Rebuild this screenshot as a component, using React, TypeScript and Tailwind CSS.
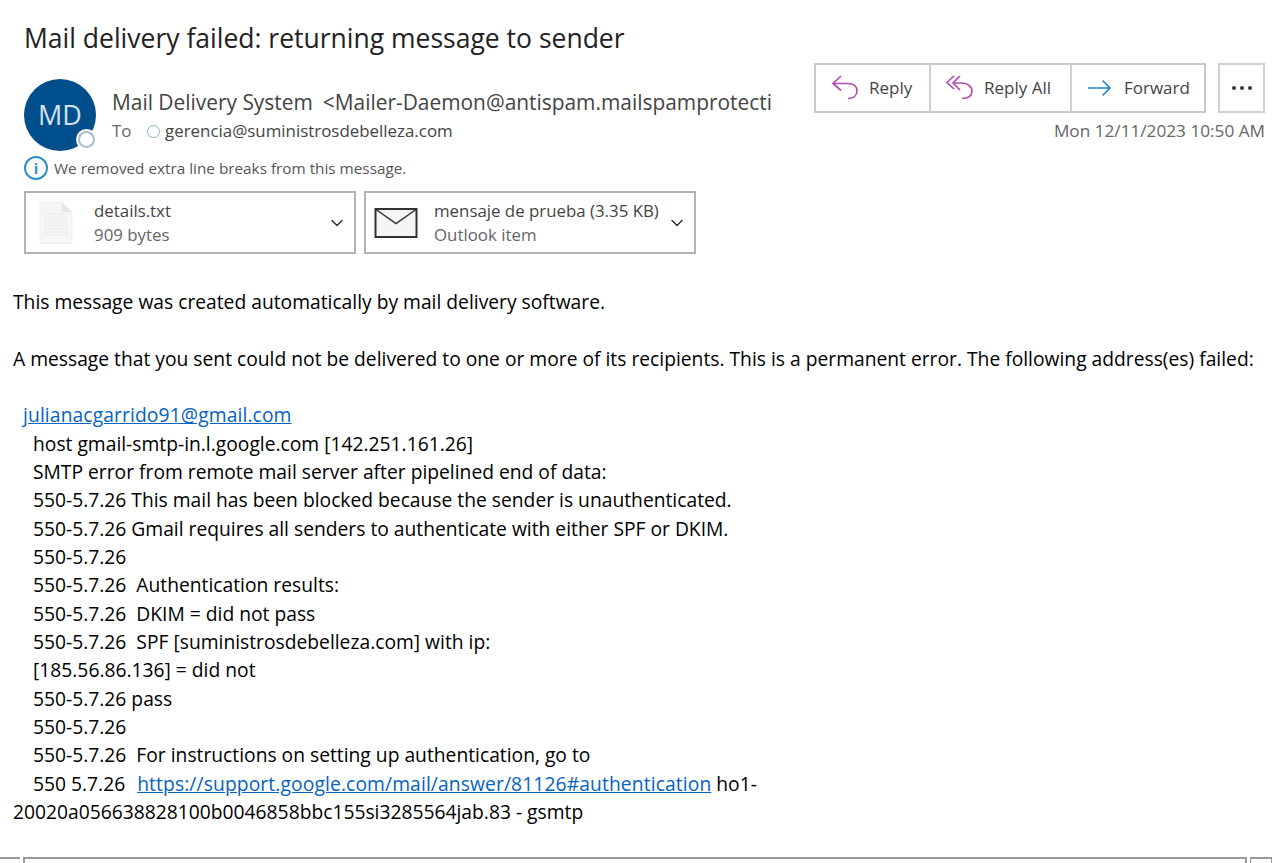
import { ChevronDown } from "lucide-react";

const font = "font-['Open_Sans',sans-serif]";

function ReplyIcon() {
  return (
    <svg width="28" height="28" viewBox="0 0 28 28" fill="none" stroke="#b04fb2" strokeWidth="1.7">
      <path d="M10 2 L2 9.5 L10 16.5" />
      <path d="M2 9.5 H17 C23 9.5 26 13 26 17 C26 21.5 22.5 24.5 17 24.5" />
    </svg>
  );
}

function ReplyAllIcon() {
  return (
    <svg width="28" height="28" viewBox="0 0 28 28" fill="none" stroke="#b04fb2" strokeWidth="1.7">
      <path d="M8 2 L1 8.5 L8 15" />
      <path d="M14 2 L7 9 L14 16" />
      <path d="M7 9 H16 C22 9 26 13 26 17 C26 21.5 22.5 24.5 16 24.5" />
    </svg>
  );
}

function ForwardIcon() {
  return (
    <svg width="24" height="20" viewBox="0 0 24 20" fill="none" stroke="#2b88c8" strokeWidth="1.6">
      <path d="M1 10 H23" />
      <path d="M15.5 2.5 L23 10 L15.5 17.5" />
    </svg>
  );
}

function DocIcon() {
  return (
    <svg width="34" height="42" viewBox="0 0 34 42">
      <path d="M1 0.5 H23 L33 10 V41.5 H1 Z" fill="#f6f6f6" stroke="#efefef" />
      <path d="M23 0.5 V10 H33 Z" fill="#e6e6e6" />
      <path d="M5 12 H29 M5 15 H29 M5 18 H29 M5 21 H29 M5 24 H29 M5 27 H29 M5 30 H29 M5 33 H29" stroke="#eaeaea" />
    </svg>
  );
}

function EnvelopeIcon() {
  return (
    <svg width="44" height="30" viewBox="0 0 44 30" fill="#f5f5f5" stroke="#333333" strokeWidth="2">
      <rect x="1.5" y="1" width="41" height="28" />
      <path d="M2 1.5 L22 15.5 L42 1.5" fill="none" strokeWidth="1.5" />
    </svg>
  );
}

function Attachment({ icon, name, sub, gap }: { icon: React.ReactNode; name: string; sub: string; gap: string }) {
  return (
    <div className="w-[332px] h-[63px] border-2 border-[#b4b4b4] bg-white flex items-center">
      <div className={`flex shrink-0 ${gap}`}>{icon}</div>
      <div className="flex-1 pt-[1px] text-[16.85px] leading-[24px] text-[#444] whitespace-nowrap">
        <div>{name}</div>
        <div className="text-[#666]">{sub}</div>
      </div>
      <ChevronDown className="w-[20px] h-[20px] text-[#333] mr-[7px]" strokeWidth={1.8} />
    </div>
  );
}

const lines = [
  "host gmail-smtp-in.l.google.com [142.251.161.26]",
  "SMTP error from remote mail server after pipelined end of data:",
  "550-5.7.26 This mail has been blocked because the sender is unauthenticated.",
  "550-5.7.26 Gmail requires all senders to authenticate with either SPF or DKIM.",
  "550-5.7.26",
  "550-5.7.26  Authentication results:",
  "550-5.7.26  DKIM = did not pass",
  "550-5.7.26  SPF [suministrosdebelleza.com] with ip:",
  "[185.56.86.136] = did not",
  "550-5.7.26 pass",
  "550-5.7.26",
  "550-5.7.26  For instructions on setting up authentication, go to",
];

export default function App() {
  return (
    <div className={`w-[1280px] h-[863px] overflow-hidden bg-white flex flex-col ${font}`}>
      <h1 className="pl-[24px] pt-[19px] text-[26.5px] leading-[38px] text-[#222] whitespace-nowrap">
        Mail delivery failed: returning message to sender
      </h1>

      <div className="flex h-[196px] pl-[24px] pr-[15px] pt-[6px]">
        <div className="w-[747px] shrink-0">
          <div className="flex pt-[16px]">
            <div className="relative w-[72px] h-[72px] shrink-0 rounded-full bg-[#004e8c] flex items-center justify-center text-[27px] text-[#d5e3f0]">
              MD
              <div className="absolute left-[52px] top-[50px] w-[21px] h-[21px] rounded-full bg-white flex items-center justify-center">
                <div className="w-[17px] h-[17px] rounded-full border-2 border-[#a9bcc9]" />
              </div>
            </div>
            <div className="pl-[16px] min-w-0">
              <div className="flex text-[20.9px] leading-[28px] pt-[9px] text-[#444] whitespace-nowrap">
                <span>Mail Delivery System</span>
                <span className="ml-[10px]">&lt;Mailer-Daemon@antispam.mailspamprotecti</span>
              </div>
              <div className="flex items-center h-[30px] text-[16.9px] text-[#444] whitespace-nowrap">
                <span className="text-[#666] w-[35px]">To</span>
                <span className="w-[13px] h-[13px] rounded-full border border-[#8fb0c4] mr-[5px]" />
                gerencia@suministrosdebelleza.com
              </div>
            </div>
          </div>
          <div className="flex items-center h-[24px] mt-[5px] text-[15.3px] text-[#555] whitespace-nowrap">
            <div className="w-[24px] h-[24px] rounded-full border-2 border-[#2d8fc4] flex items-center justify-center text-[#2d8fc4] text-[15px] font-bold mr-[6px]">
              i
            </div>
            <span className="pt-[1px]">We removed extra line breaks from this message.</span>
          </div>
          <div className="flex gap-[8px] mt-[11px]">
            <Attachment icon={<DocIcon />} name="details.txt" sub="909 bytes" gap="ml-[13px] mr-[21px]" />
            <Attachment icon={<EnvelopeIcon />} name="mensaje de prueba (3.35 KB)" sub="Outlook item" gap="ml-[8px] mr-[16px]" />
          </div>
        </div>

        <div className="flex-1 flex flex-col items-end">
          <div className="flex gap-[12px]">
            <div className="flex h-[50px] border-2 border-[#c8c8c8] text-[17px] text-[#444]">
              <div className="w-[115px] flex items-center pl-[15px] gap-[10px] border-r-2 border-[#d0d0d0]">
                <ReplyIcon />
                Reply
              </div>
              <div className="w-[141px] flex items-center pl-[15px] gap-[10px] border-r-2 border-[#d0d0d0]">
                <ReplyAllIcon />
                Reply All
              </div>
              <div className="w-[132px] flex items-center pl-[15px] gap-[13px]">
                <ForwardIcon />
                Forward
              </div>
            </div>
            <div className="w-[47px] h-[50px] border-2 border-[#d0d0d0] flex items-center justify-center gap-[4px]">
              <span className="w-[4px] h-[4px] rounded-full bg-[#333]" />
              <span className="w-[4px] h-[4px] rounded-full bg-[#333]" />
              <span className="w-[4px] h-[4px] rounded-full bg-[#333]" />
            </div>
          </div>
          <div className="text-[17.2px] leading-[24px] text-[#666] mt-[6px] whitespace-nowrap">Mon 12/11/2023 10:50 AM</div>
        </div>
      </div>

      <div className="pl-[13px] pt-[35px] text-[19.25px] leading-[28.33px] text-black whitespace-pre">
        <div>This message was created automatically by mail delivery software.</div>
        <div className="h-[28.33px]" />
        <div>A message that you sent could not be delivered to one or more of its recipients. This is a permanent error. The following address(es) failed:</div>
        <div className="h-[28.33px]" />
        <div className="pl-[10px] text-[#0563c1] underline tracking-[0.11px]">julianacgarrido91@gmail.com</div>
        {lines.map((line, i) => (
          <div key={i} className="pl-[20px]">{line}</div>
        ))}
        <div className="pl-[20px]">
          {"550 5.7.26  "}
          <span className="ml-[2px] text-[#0563c1] underline tracking-[0.11px]">https://support.google.com/mail/answer/81126#authentication</span>
          {" ho1-"}
        </div>
        <div>20020a056638828100b0046858bbc155si3285564jab.83 - gsmtp</div>
      </div>

      <div className="mt-auto flex h-[6px] gap-[3px] pr-[8px]">
        <div className="w-[20px] border-t-2 border-[#9a9a9a]" />
        <div className="flex-1 border-t-2 border-x-2 border-[#9a9a9a]" />
        <div className="w-[22px] border-t-2 border-x border-[#9a9a9a]" />
      </div>
    </div>
  );
}
